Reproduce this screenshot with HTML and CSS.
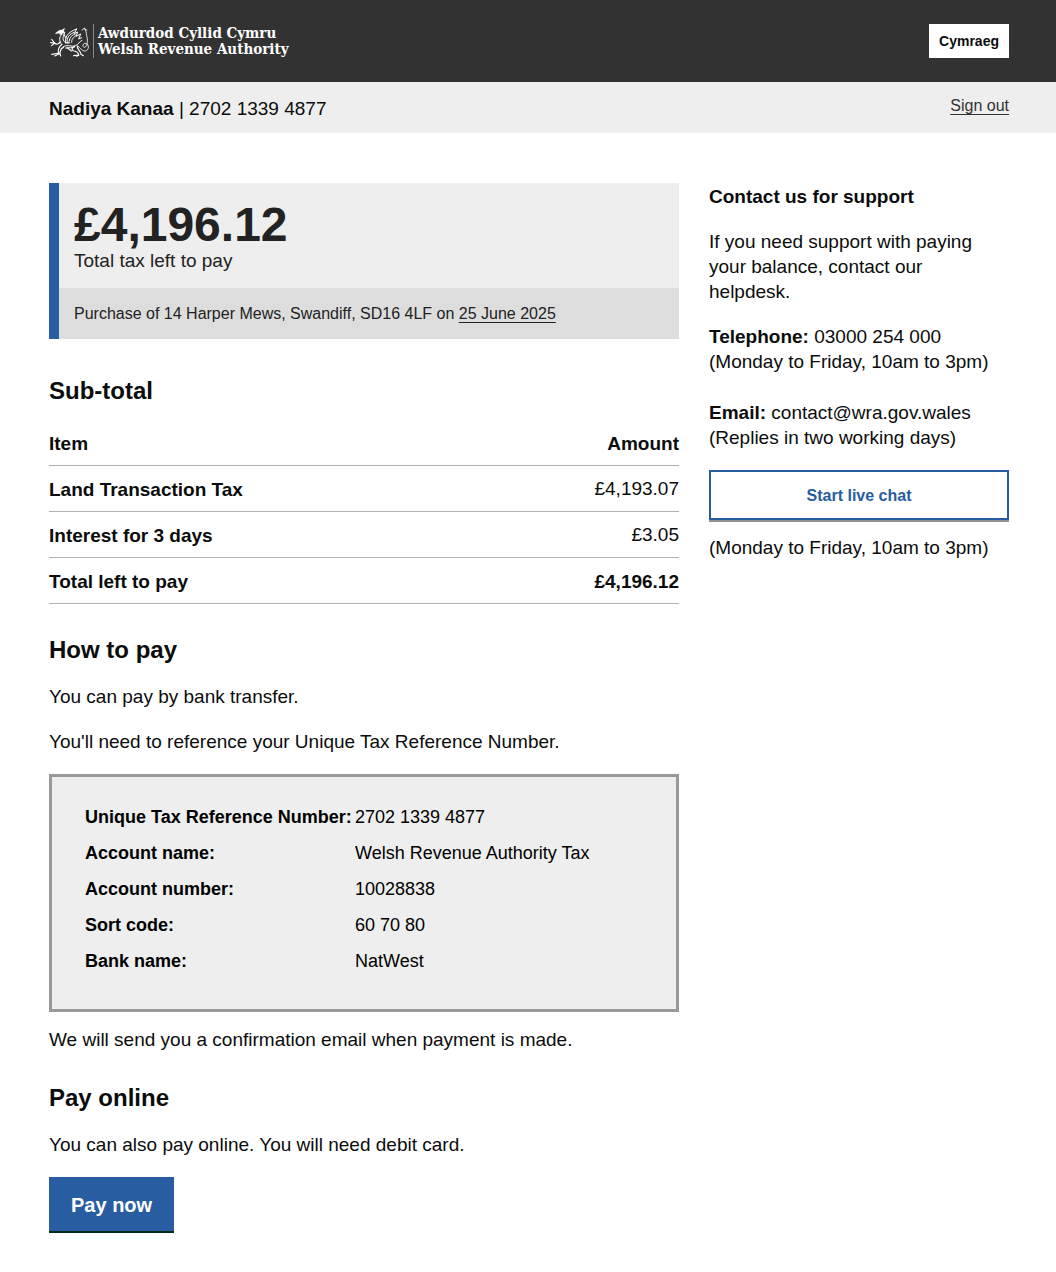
FILE: index.html
```html
<!DOCTYPE html>
<html lang="en">
<head>
<meta charset="utf-8">
<meta name="viewport" content="width=device-width, initial-scale=1">
<title>Pay your tax - Welsh Revenue Authority</title>
<link rel="stylesheet" href="styles.css">
</head>
<body>
<header class="site-header">
  <div class="container header-row">
    <a class="logo" href="#">
      <svg class="dragon" viewBox="12 12 126 102" aria-hidden="true" fill="none" stroke="#fff" stroke-width="3" stroke-linecap="round" stroke-linejoin="round">
        <path d="M32 39l11-8 7-1 9-5-3 8 4 5-7 2-4 5-6-3 3-3-14 2z" fill="#fff" stroke-width="1"/>
        <path d="M51 42c-10 10-9 22 0 32M59 38c-3 10-7 14-4 23 3 7 11 8 17 8"/>
        <path d="M46 66c-6 7-12 8-17 3M29 69l-9-11M29 69l-12-1M29 69l-9 8" stroke-width="3.5"/>
        <path d="M50 74c-10 6-11 13-10 26M55 82c-8 3-9 9-10 17M43 99l-23 4M43 101l-14 7M45 101l2 7" stroke-width="3.5"/>
        <path d="M62 70c-4-18 6-34 33-43M67 69c-4-14 6-27 21-32M72 69c0-14 6-22 18-27M80 67c-1-9 5-16 14-20M95 27l-7 14 10-5-5 13 14-7-6 15 9-4M62 54l-5-11"/>
        <path d="M55 80c15-8 24 2 36-3 9-3 12-12 20-16M62 84c10-3 19 2 27-3"/>
        <path d="M66 84c7 2 10 7 14 9M89 79c-10 4-10 12-2 14 8 1 13 4 14 12M97 78c-2 10 10 13 11 25M101 105l-15 2M102 105l-7 4M108 103l7 4" stroke-width="3.5"/>
        <path d="M100 79c9 9 15 17 24 13 11-6 6-24-5-22-9 3-5 16 2 11 8-8 7-24 4-34-1-9-2-15-7-22M118 25l-7 5M118 25l8 6" stroke-width="2.5"/>
      </svg>
      <span class="logo-text"><span>Awdurdod Cyllid Cymru</span><span>Welsh Revenue Authority</span></span>
    </a>
    <button class="language" type="button" lang="cy">Cymraeg</button>
  </div>
</header>
<div class="account-bar">
  <div class="container account-row">
    <p><strong>Nadiya Kanaa</strong> | 2702 1339 4877</p>
    <a class="sign-out" href="#">Sign out</a>
  </div>
</div>
<div class="container page">
  <main>
    <section class="balance">
      <div class="balance-total">
        <p class="amount">£4,196.12</p>
        <p>Total tax left to pay</p>
      </div>
      <p class="balance-note">Purchase of 14 Harper Mews, Swandiff, SD16 4LF on <a href="#">25 June 2025</a></p>
    </section>
    <h2>Sub-total</h2>
    <table class="costs">
      <thead><tr><th scope="col">Item</th><th scope="col">Amount</th></tr></thead>
      <tbody>
        <tr><th scope="row">Land Transaction Tax</th><td>£4,193.07</td></tr>
        <tr><th scope="row">Interest for 3 days</th><td>£3.05</td></tr>
        <tr class="total"><th scope="row">Total left to pay</th><td>£4,196.12</td></tr>
      </tbody>
    </table>
    <h2>How to pay</h2>
    <p class="text">You can pay by bank transfer.</p>
    <p class="text">You'll need to reference your Unique Tax Reference Number.</p>
    <dl class="bank">
      <dt>Unique Tax Reference Number:</dt><dd>2702 1339 4877</dd>
      <dt>Account name:</dt><dd>Welsh Revenue Authority Tax</dd>
      <dt>Account number:</dt><dd>10028838</dd>
      <dt>Sort code:</dt><dd>60 70 80</dd>
      <dt>Bank name:</dt><dd>NatWest</dd>
    </dl>
    <p>We will send you a confirmation email when payment is made.</p>
    <h2>Pay online</h2>
    <p class="text">You can also pay online. You will need debit card.</p>
    <button class="pay" type="button">Pay now</button>
  </main>
  <aside class="support">
    <h3>Contact us for support</h3>
    <p class="text intro">If you need support with paying your balance, contact our helpdesk.</p>
    <p class="phone"><strong>Telephone:</strong> 03000 254 000<br>(Monday to Friday, 10am to 3pm)</p>
    <p class="text"><strong>Email:</strong> contact@wra.gov.wales<br>(Replies in two working days)</p>
    <button class="chat" type="button">Start live chat</button>
    <p>(Monday to Friday, 10am to 3pm)</p>
  </aside>
</div>
</body>
</html>
```
FILE: styles.css
```css
* { box-sizing: border-box; }
body {
  margin: 0;
  background: #fff;
  color: #0b0c0c;
  font: 19px/25px "Liberation Sans", Arial, sans-serif;
}
p, h2, h3, dl, dd { margin: 0; }
button { font-family: inherit; font-weight: 700; cursor: pointer; border: 0; }
.container { max-width: 1170px; margin: 0 auto; padding: 0 47px 0 49px; }

.site-header { background: #323232; padding: 24px 0; }
.header-row { display: flex; justify-content: space-between; align-items: center; }
.logo { display: flex; align-items: center; color: #fff; text-decoration: none; }
.dragon { width: 42px; height: 34px; margin-right: 2px; }
.logo-text {
  display: grid;
  border-left: 1px solid #888;
  padding: 1px 0 1px 4px;
  font: 700 15px/16px "DejaVu Serif Condensed", "DejaVu Serif", serif;
}
.language { background: #fff; color: #0b0c0c; font-size: 14px; line-height: 18px; padding: 8px 10px; }

.account-bar { background: #eee; }
.account-row { display: flex; justify-content: space-between; padding-top: 14px; padding-bottom: 12px; }
.sign-out { color: #323232; font-size: 16px; line-height: 20px; text-underline-offset: 3px; text-decoration-thickness: 1px; }

.page { display: grid; grid-template-columns: 21fr 10fr; gap: 30px; padding-top: 50px; padding-bottom: 39px; }

.balance { border-left: 10px solid #285da1; background: #eee; color: #222; margin-bottom: 37px; }
.balance-total { padding: 18px 15px 15px; }
.amount { font-size: 48px; line-height: 47px; font-weight: 700; }
.balance-note { background: #ddd; padding: 13px 15px; font-size: 16px; }
.balance-note a { color: inherit; text-underline-offset: 3px; text-decoration-thickness: 1px; }

h2 { font-size: 24px; line-height: 30px; margin: 31px 0 19px; }
h3 { font-size: 19px; line-height: 25px; margin-bottom: 20px; }
.balance + h2 { margin-bottom: 14px; }
.text { margin-bottom: 20px; }

.costs { width: 100%; border-spacing: 0; }
.costs th, .costs td { height: 46px; padding: 0; border-bottom: 1px solid #b1b4b6; text-align: left; }
.costs th, .costs .total td { padding-top: 2px; }
.costs th:last-child, .costs td { text-align: right; }
.total { font-weight: 700; }

.bank {
  display: grid;
  grid-template-columns: 270px 1fr;
  border: 3px solid #999;
  background: #eee;
  color: #000;
  padding: 22px 33px 30px;
  margin-bottom: 15px;
  font-size: 18px;
  line-height: 36px;
}
.bank dt { font-weight: 700; white-space: nowrap; }

.pay { background: #285da1; color: #fff; font-size: 20px; line-height: 24px; padding: 16px 22px 14px; border-bottom: 2px solid #002d18; }

.support { padding-top: 1px; }
.intro { padding-right: 15px; }
.phone { margin-bottom: 26px; }
.chat {
  display: block;
  width: 100%;
  margin-bottom: 15px;
  padding: 14px 13px 12px;
  border: 2px solid #285da1;
  background: #fff;
  box-shadow: 0 2px 0 #929191;
  color: #285da1;
  font-size: 16px;
  line-height: 20px;
}
```
